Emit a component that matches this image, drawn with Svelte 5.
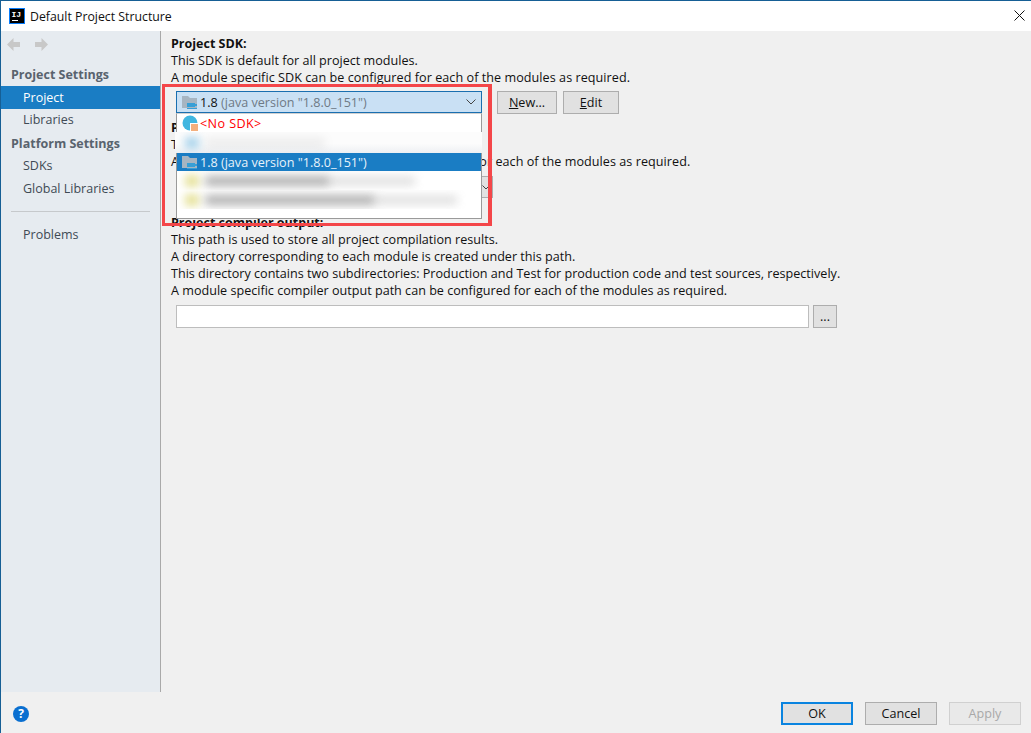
<script>
	const nav = [
		{ type: 'head', label: 'Project Settings' },
		{ type: 'item', label: 'Project', selected: true },
		{ type: 'item', label: 'Libraries' },
		{ type: 'head', label: 'Platform Settings' },
		{ type: 'item', label: 'SDKs' },
		{ type: 'item', label: 'Global Libraries' }
	];

	const outputLines = [
		'This path is used to store all project compilation results.',
		'A directory corresponding to each module is created under this path.',
		'This directory contains two subdirectories: Production and Test for production code and test sources, respectively.',
		'A module specific compiler output path can be configured for each of the modules as required.'
	];
</script>

{#snippet folder()}
	<svg class="icon" width="16" height="16" viewBox="0 0 16 16">
		<path d="M0 2h6l2 2h7v10H0z" fill="#a6b5c2" />
		<path d="M5 9h8v1h2v2h-2v1H5z" fill="#389fd6" />
		<rect x="5" y="14" width="10" height="1" fill="#389fd6" />
	</svg>
{/snippet}

<div class="window">
	<header class="titlebar">
		<svg class="logo" width="16" height="16" viewBox="0 0 16 16">
			<rect width="16" height="16" fill="#087cfa" />
			<rect x="1" y="1" width="14" height="14" fill="#000" />
			<rect x="3" y="12" width="6" height="1" fill="#fff" />
			<text x="2.5" y="9" class="logotext">IJ</text>
		</svg>
		<span class="title">Default Project Structure</span>
		<svg class="close" width="11" height="11" viewBox="0 0 11 11">
			<path d="M.5.5l10 10M10.5.5l-10 10" stroke="#111" fill="none" />
		</svg>
	</header>

	<div class="body">
		<aside class="sidebar">
			<div class="arrows">
				<svg width="13" height="13" viewBox="0 0 13 13"><path d="M6.5 0L0 6.5 6.5 13V9H13V4H6.5z" fill="#c8c8c8" /></svg>
				<svg width="13" height="13" viewBox="0 0 13 13"><path d="M6.5 0L13 6.5 6.5 13V9H0V4h6.5z" fill="#c8c8c8" /></svg>
			</div>
			{#each nav as n}
				<div class={n.type} class:selected={n.selected}>{n.label}</div>
			{/each}
			<div class="sep"></div>
			<div class="item">Problems</div>
		</aside>

		<main class="content">
			<h4>Project SDK:</h4>
			<p>This SDK is default for all project modules.</p>
			<p class="wide">A module specific SDK can be configured for each of the modules as required.</p>
			<div class="sdkrow">
				<div class="combo">
					{@render folder()}
					<span class="val">1.8 <span class="muted">(java version "1.8.0_151")</span></span>
					<svg class="chev" width="10" height="6" viewBox="0 0 10 6"><path d="M.5.5L5 5 9.5.5" stroke="#444" fill="none" /></svg>
				</div>
				<button class="btn new"><u>N</u>ew...</button>
				<button class="btn edit"><u>E</u>dit</button>
			</div>

			<h4 class="second">Project language level:</h4>
			<p>This language level is default for all modules.</p>
			<p class="wide">A module specific language level can be configured for each of the modules as required.</p>
			<div class="langrow">
				<div class="langcombo">
					<svg class="chev" width="8" height="5" viewBox="0 0 8 5"><path d="M.5.5L4 4 7.5.5" stroke="#444" fill="none" /></svg>
				</div>
			</div>

			<h4 class="third">Project compiler output:</h4>
			{#each outputLines as line}
				<p>{line}</p>
			{/each}
			<div class="pathrow">
				<div class="field"></div>
				<button class="btn dots">...</button>
			</div>

			<!-- dropdown popup and annotation sit over the form -->
			<div class="popup">
				<div class="row nosdk">
					<svg class="icon" width="16" height="16" viewBox="0 0 16 16">
						<circle cx="8" cy="8" r="7.5" fill="#40b6e0" />
						<rect x="8" y="8" width="8" height="8" fill="#fff" />
						<rect x="9" y="9" width="7" height="7" fill="#f4af7d" />
					</svg>
					<span>&lt;No SDK&gt;</span>
				</div>
				<div class="row blur one"><i></i><b></b></div>
				<div class="row active">
					{@render folder()}
					<span class="val">1.8 (java version "1.8.0_151")</span>
				</div>
				<div class="row blur two"><i></i><b></b><em></em></div>
				<div class="row blur three"><i></i><b></b><em></em></div>
			</div>
			<div class="annot"></div>
		</main>
	</div>

	<footer class="footer">
		<div class="help">?</div>
		<div class="actions">
			<button class="btn act ok">OK</button>
			<button class="btn act">Cancel</button>
			<button class="btn act off">Apply</button>
		</div>
	</footer>
</div>

<style>
	:global(body) {
		margin: 0;
		background: #f0f0f0;
	}

	.window {
		width: 1031px;
		height: 733px;
		box-sizing: border-box;
		border-top: 1px solid #165f95;
		border-left: 1px solid #165f95;
		display: flex;
		flex-direction: column;
		font-family: 'Open Sans', 'Noto Sans', sans-serif;
		font-size: 12.6px;
		color: #111;
		background: #f0f0f0;
		overflow: hidden;
	}

	.titlebar {
		height: 30px;
		background: #fff;
		display: flex;
		align-items: center;
		padding: 0 8px;
		flex: none;
	}

	.logo {
		margin-right: 5px;
	}

	.logotext {
		font: bold 8px 'Liberation Mono', monospace;
		fill: #fff;
	}

	.title {
		font-size: 12.3px;
		color: #111;
	}

	.close {
		margin-left: auto;
		margin-right: -2px;
		margin-bottom: 2px;
	}

	.body {
		flex: 1;
		display: flex;
		min-height: 0;
	}

	.sidebar {
		width: 159px;
		background: #e6ebf0;
		border-right: 1px solid #a9a9a9;
		flex: none;
		font-size: 12.5px;
	}

	.arrows {
		height: 27px;
		display: flex;
		align-items: center;
		gap: 15px;
		padding-left: 6px;
		margin-bottom: 5px;
	}

	.head {
		height: 23px;
		line-height: 23px;
		padding-left: 10px;
		font-weight: 700;
		color: #59636e;
	}

	.item {
		height: 23px;
		line-height: 22px;
		padding-left: 22px;
		color: #3f4a55;
	}

	.selected {
		background: #1a7dc4;
		color: #fff;
		line-height: 23px;
	}

	.sep {
		height: 1px;
		background: #c6c9cc;
		margin: 10px 10px 12px 10px;
	}

	.content {
		flex: 1;
		position: relative;
		padding: 4px 0 0 10px;
	}

	h4 {
		margin: 0;
		font-size: 12.5px;
		line-height: 17px;
		font-weight: 700;
	}

	p {
		margin: 0;
		line-height: 17px;
		white-space: nowrap;
	}

	.wide {
		letter-spacing: 0.05px;
	}

	.sdkrow {
		display: flex;
		align-items: flex-start;
		margin: 5px 0 0 5px;
		height: 23px;
	}

	.combo {
		width: 306px;
		height: 22px;
		box-sizing: border-box;
		background: #c9e0f4;
		border: 1px solid #1a6fb0;
		display: flex;
		align-items: center;
		padding-left: 5px;
		position: relative;
		flex: none;
	}

	.val {
		margin-left: 2px;
	}

	.muted {
		color: #6f7a85;
	}

	.chev {
		position: absolute;
		right: 5px;
		top: 7px;
	}

	.icon {
		flex: none;
	}

	.btn {
		height: 23px;
		box-sizing: border-box;
		background: #e1e1e1;
		border: 1px solid #adadad;
		font: inherit;
		color: #111;
		padding: 0;
		border-radius: 0;
	}

	.new {
		width: 60px;
		margin-left: 15px;
	}

	.edit {
		width: 56px;
		margin-left: 6px;
	}

	.second {
		margin-top: 5px;
	}

	.langrow {
		height: 22px;
		margin: 6px 0 0 5px;
	}

	.langcombo {
		width: 317px;
		height: 22px;
		box-sizing: border-box;
		background: #e1e1e1;
		border: 1px solid #adadad;
		position: relative;
	}

	.langcombo .chev {
		right: 2px;
		top: 8px;
	}

	.third {
		margin-top: 16px;
	}

	.pathrow {
		display: flex;
		gap: 4px;
		margin: 6px 0 0 5px;
	}

	.field {
		width: 633px;
		height: 23px;
		box-sizing: border-box;
		background: #fff;
		border: 1px solid #bdbdbd;
	}

	.dots {
		width: 24px;
		line-height: 14px;
	}

	.popup {
		position: absolute;
		left: 15px;
		top: 82px;
		width: 306px;
		height: 106px;
		box-sizing: border-box;
		background: #fff;
		border: 1px solid #9a9a9a;
		border-top-color: #d0d0d0;
	}

	.row {
		height: 19px;
		display: flex;
		align-items: center;
		padding-left: 5px;
		white-space: nowrap;
		overflow: hidden;
	}

	.nosdk {
		height: 18px;
		color: #f00;
	}

	.nosdk span {
		margin-left: 2px;
		letter-spacing: 0.4px;
	}

	.row.active {
		height: 18px;
		background: #1a7dc4;
		color: #e8f2fa;
	}

	.row i {
		display: block;
		flex: none;
		width: 14px;
		height: 12px;
		margin: 0 6px 0 3px;
		filter: blur(4px);
		background: #e6e29a;
	}

	.row b {
		display: block;
		flex: none;
		height: 10px;
		filter: blur(5px);
		background: #7c7c7c;
		opacity: 0.6;
	}

	.row em {
		display: block;
		flex: none;
		height: 8px;
		filter: blur(5px);
		background: #a8a8a8;
		opacity: 0.4;
	}

	.blur.one {
		height: 21px;
		width: 300px;
		margin-left: -2px;
		padding-left: 7px;
		position: relative;
		background: linear-gradient(#fcfcfc 55%, #eef0f3);
	}

	.blur.one i {
		background: #a9d3ec;
	}

	.blur.one b {
		width: 120px;
		opacity: 0.12;
	}

	.blur.two b {
		width: 125px;
	}

	.blur.two em {
		width: 85px;
	}

	.blur.three b {
		width: 170px;
	}

	.blur.three em {
		width: 82px;
	}

	.annot {
		position: absolute;
		left: 1px;
		top: 53px;
		width: 323px;
		height: 136px;
		border: 3px solid #f44649;
		border-right-width: 4px;
		pointer-events: none;
	}

	.footer {
		height: 41px;
		flex: none;
		box-sizing: border-box;
		background: #f0f0f0;
		display: flex;
		align-items: center;
		justify-content: space-between;
		padding: 2px 10px 0 12px;
	}

	.help {
		width: 16px;
		height: 16px;
		border-radius: 50%;
		background: #0a6fd0;
		color: #fff;
		font: bold 12px/16px 'Open Sans', sans-serif;
		text-align: center;
	}

	.actions {
		display: flex;
		gap: 12px;
	}

	.act {
		width: 72px;
		height: 23px;
	}

	.ok {
		border: 2px solid #0a84e0;
	}

	.off {
		color: #a8a8a8;
		border-color: #d0d0d0;
		background: #e9e9e9;
	}
</style>
